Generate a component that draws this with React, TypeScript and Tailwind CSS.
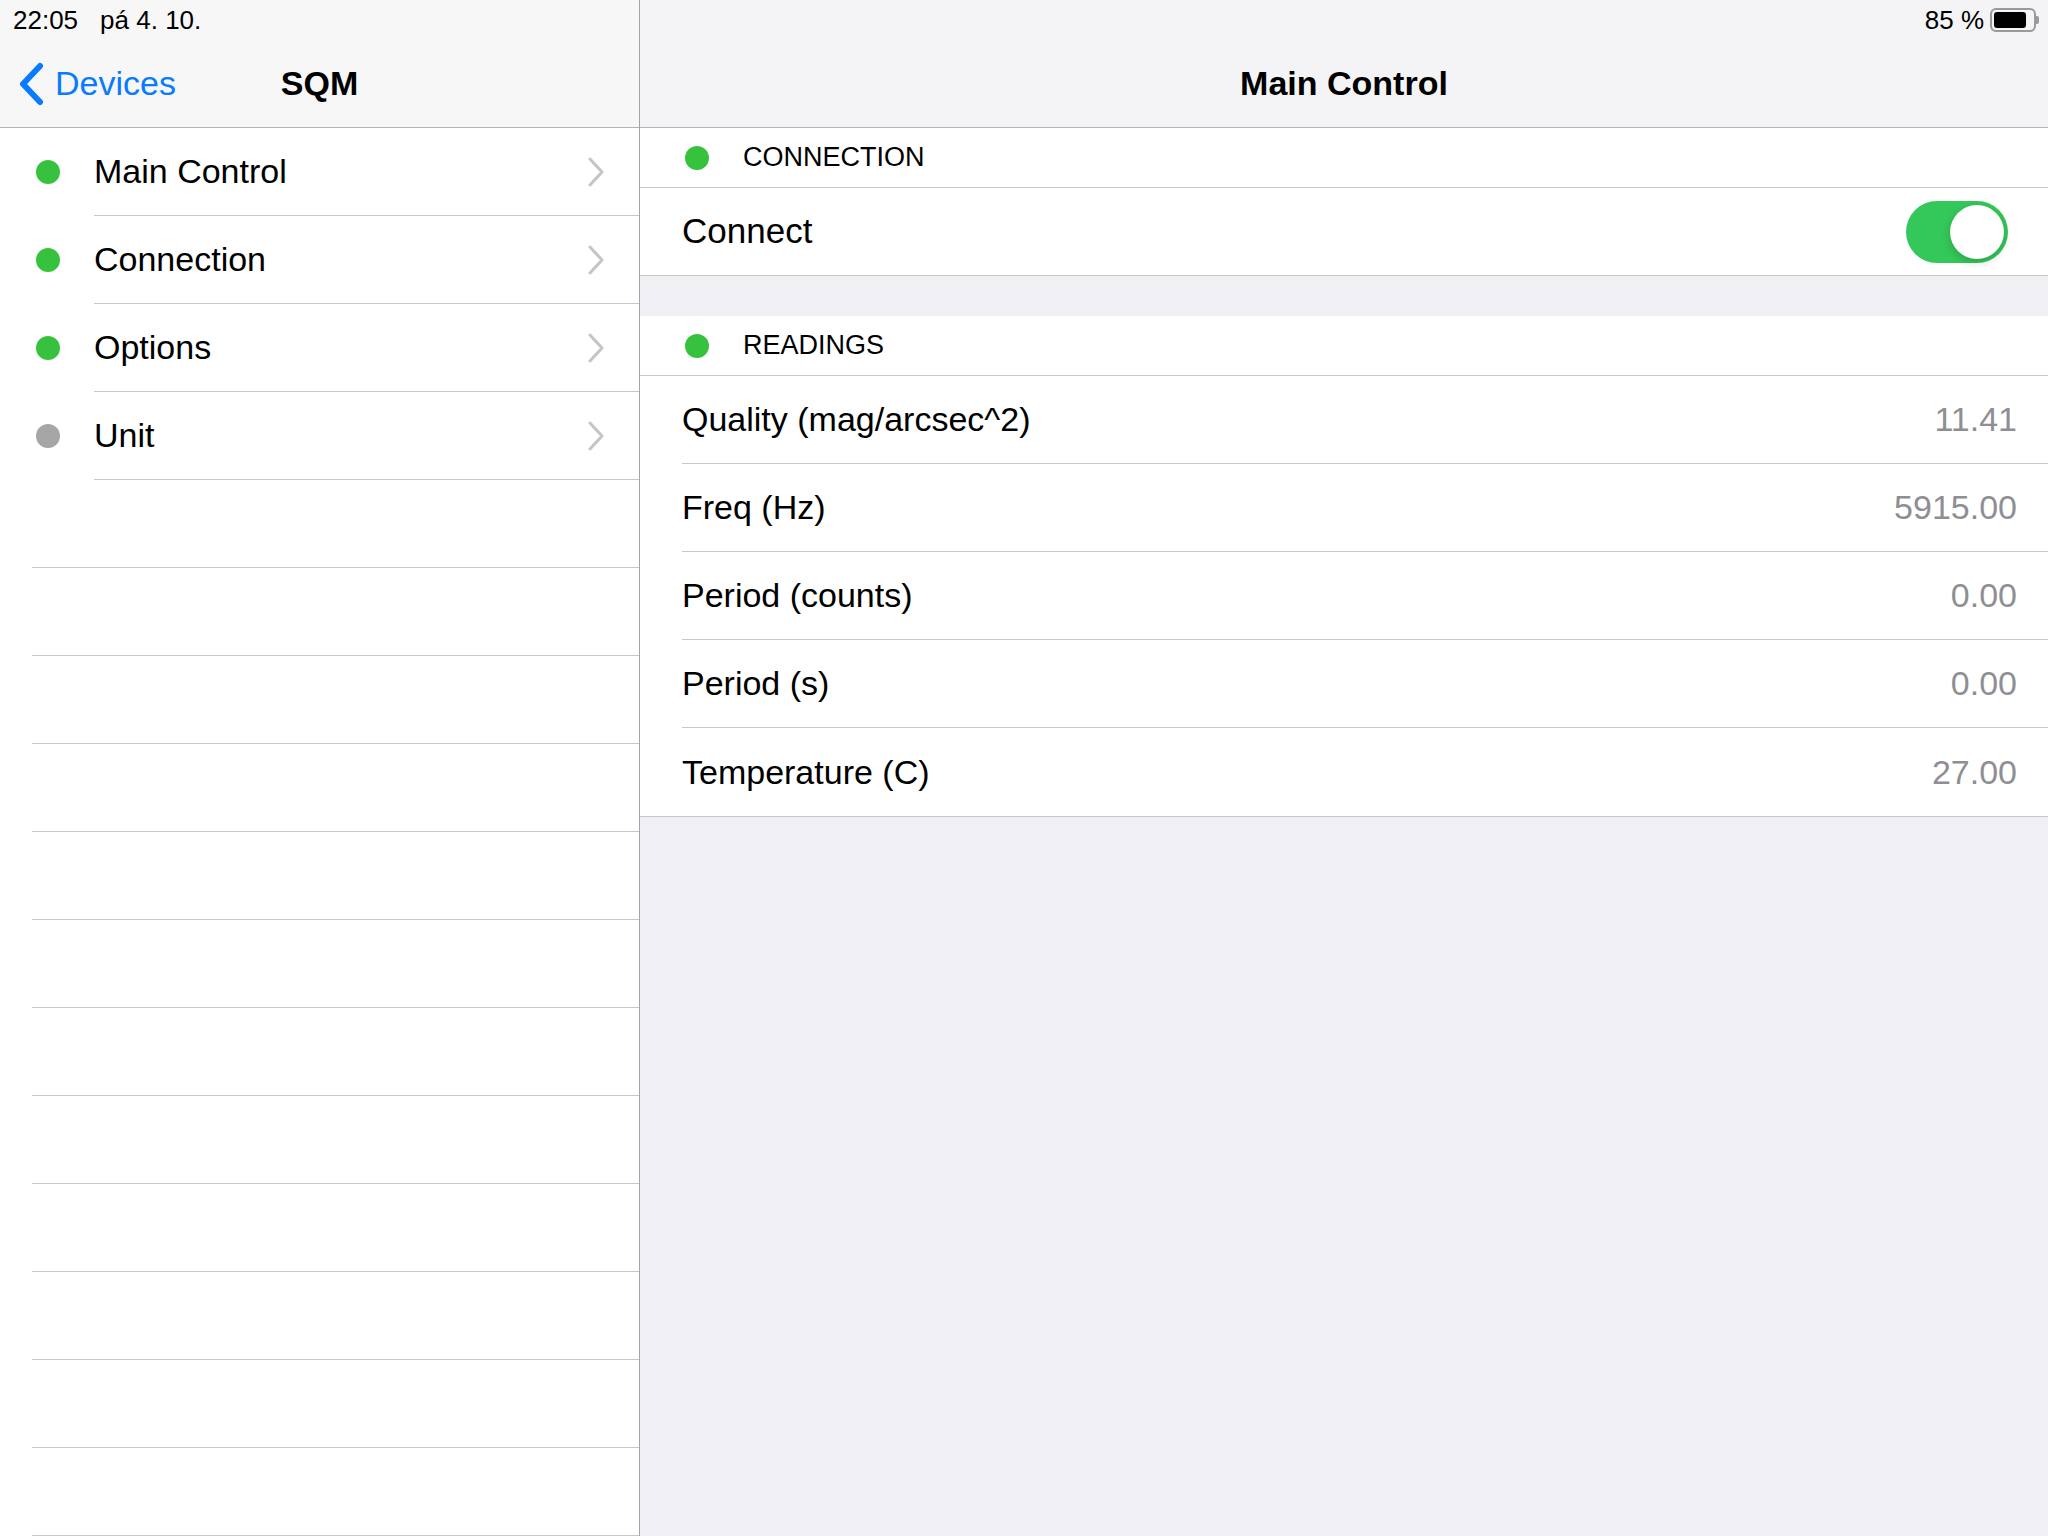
const font = { fontFamily: '"Liberation Sans", Arial, sans-serif' };

const menu = [
  { label: 'Main Control', on: true },
  { label: 'Connection', on: true },
  { label: 'Options', on: true },
  { label: 'Unit', on: false },
];

const readings = [
  { label: 'Quality (mag/arcsec^2)', value: '11.41' },
  { label: 'Freq (Hz)', value: '5915.00' },
  { label: 'Period (counts)', value: '0.00' },
  { label: 'Period (s)', value: '0.00' },
  { label: 'Temperature (C)', value: '27.00' },
];

function Chevron() {
  return (
    <svg width="16" height="30" viewBox="0 0 16 30" className="shrink-0">
      <polyline points="2,2 14,15 2,28" fill="none" stroke="#c4c4c8" strokeWidth="3" strokeLinecap="round" strokeLinejoin="round" />
    </svg>
  );
}

function Dot({ on }: { on: boolean }) {
  return <span className={`block w-[24px] h-[24px] rounded-full ${on ? 'bg-[#37c23e]' : 'bg-[#a6a6a6]'}`} />;
}

function Battery() {
  return (
    <div className="flex items-center">
      <div className="w-[46px] h-[24px] rounded-[6px] border-2 border-[#9a9a9a] p-[2px]">
        <div className="h-full w-[85%] bg-black rounded-[3px]" />
      </div>
      <div className="w-[3px] h-[8px] bg-[#9a9a9a] rounded-r-[2px]" />
    </div>
  );
}

export default function App() {
  return (
    <div className="w-[2048px] h-[1536px] flex overflow-hidden text-black" style={font}>

      {/* ── Master column ── */}
      <div className="w-[640px] h-full flex flex-col bg-white border-r border-[#a4a4a8] shrink-0">
        <div className="h-[128px] bg-[#f7f7f7] border-b border-[#b4b4b4] shrink-0">
          <div className="h-[40px] flex items-center pl-[13px] text-[26px] gap-[22px]">
            <span>22:05</span>
            <span>pá 4. 10.</span>
          </div>
          <div className="h-[87px] relative flex items-center">
            <div className="flex items-center pl-[18px] gap-[11px] text-[#0a7aff] text-[34px]">
              <svg width="26" height="44" viewBox="0 0 26 44">
                <polyline points="22,4 5,22 22,40" fill="none" stroke="#0a7aff" strokeWidth="6" strokeLinecap="round" strokeLinejoin="round" />
              </svg>
              <span>Devices</span>
            </div>
            <span className="absolute left-0 right-0 text-center text-[34px] font-bold pointer-events-none">SQM</span>
          </div>
        </div>

        <div className="flex-1 overflow-hidden">
          {menu.map(m => (
            <div key={m.label} className="h-[88px] flex">
              <div className="w-[94px] flex items-center pl-[36px] shrink-0">
                <Dot on={m.on} />
              </div>
              <div className="flex-1 flex items-center justify-between border-b border-[#c8c7cc] pr-[35px]">
                <span className="text-[34px]">{m.label}</span>
                <Chevron />
              </div>
            </div>
          ))}
          {Array.from({ length: 12 }).map((_, i) => (
            <div key={i} className="h-[88px] ml-[32px] border-b border-[#c8c7cc]" />
          ))}
        </div>
      </div>

      {/* ── Detail column ── */}
      <div className="flex-1 h-full flex flex-col bg-[#efeff4]">
        <div className="h-[128px] bg-[#f4f4f6] border-b border-[#b4b4b4] shrink-0">
          <div className="h-[40px] flex items-center justify-end pr-[9px] gap-[6px] text-[26px]">
            <span>85 %</span>
            <Battery />
          </div>
          <div className="h-[87px] flex items-center justify-center text-[34px] font-bold">
            Main Control
          </div>
        </div>

        {/* Connection section */}
        <div className="h-[60px] bg-white border-b border-[#c8c7cc] flex items-center pl-[45px] gap-[34px] text-[27px]">
          <Dot on />
          <span>CONNECTION</span>
        </div>
        <div className="h-[88px] bg-white border-b border-[#c8c7cc] flex items-center justify-between pl-[42px] pr-[40px]">
          <span className="text-[35px]">Connect</span>
          <div className="w-[102px] h-[62px] rounded-full bg-[#34c759] flex items-center justify-end pr-[4px]">
            <div className="w-[54px] h-[54px] rounded-full bg-white shadow-[0_3px_8px_rgba(0,0,0,0.18)]" />
          </div>
        </div>

        <div className="h-[40px] shrink-0" />

        {/* Readings section */}
        <div className="h-[60px] bg-white border-b border-[#c8c7cc] flex items-center pl-[45px] gap-[34px] text-[27px]">
          <Dot on />
          <span>READINGS</span>
        </div>
        <div className="bg-white border-b border-[#c8c7cc]">
          {readings.map((r, i) => (
            <div key={r.label} className="h-[88px] pl-[42px]">
              <div className={`h-full flex items-center justify-between pr-[31px] ${i < readings.length - 1 ? 'border-b border-[#c8c7cc]' : ''}`}>
                <span className="text-[34px]">{r.label}</span>
                <span className="text-[34px] text-[#8e8e93]">{r.value}</span>
              </div>
            </div>
          ))}
        </div>
      </div>
    </div>
  );
}
